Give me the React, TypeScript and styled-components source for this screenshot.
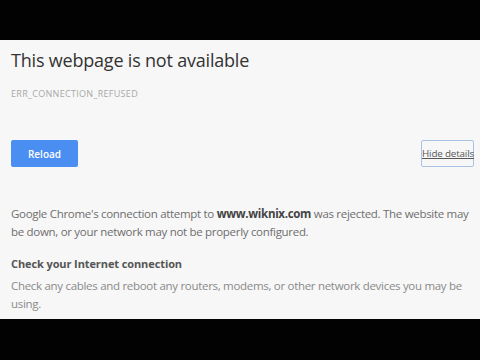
import React from "react";
import styled, { createGlobalStyle } from "styled-components";

const Global = createGlobalStyle`
  html, body { margin: 0; padding: 0; background: #020202; }
  body { font-family: "Open Sans", "Noto Sans", sans-serif; }
`;

const Frame = styled.div`
  width: 480px;
  height: 360px;
  display: flex;
  flex-direction: column;
  background: #020202;
  overflow: hidden;
`;

const Bar = styled.div<{ $h: number }>`
  height: ${(p) => p.$h}px;
  flex: none;
  background: #020202;
`;

const Page = styled.div`
  flex: 1;
  background: #f7f7f7;
  padding: 6px 6px 0 11px;
  display: flex;
  flex-direction: column;
  overflow: hidden;
`;

const Title = styled.h1`
  margin: 0;
  font-size: 18px;
  letter-spacing: -0.2px;
  font-weight: 400;
  color: #333;
  line-height: 28px;
`;

const Code = styled.div`
  margin-top: 14px;
  font-size: 9px;
  letter-spacing: 0.3px;
  color: #a8a8a8;
  line-height: 12px;
  text-transform: uppercase;
`;

const Buttons = styled.div`
  margin-top: 40px;
  display: flex;
  justify-content: space-between;
  align-items: center;
`;

const ReloadButton = styled.button`
  width: 67px;
  height: 27px;
  border: none;
  border-radius: 2px;
  background: #4a8ef2;
  color: #fff;
  font-family: inherit;
  font-size: 10px;
  font-weight: 600;
  padding: 0;
`;

const DetailsButton = styled.button`
  width: 53px;
  height: 27px;
  border: 1px solid #a9c2e6;
  border-radius: 2px;
  background: transparent;
  color: #555;
  font-family: inherit;
  font-size: 9.8px;
  letter-spacing: -0.15px;
  text-decoration: underline;
  padding: 0;
  white-space: nowrap;
`;

const Para = styled.p`
  margin: 38px 0 0;
  font-size: 11.5px;
  letter-spacing: -0.3px;
  line-height: 18px;
  color: #6e6e6e;
  b { color: #444; font-weight: 700; }
`;

const Heading = styled.h2`
  margin: 14px 0 0;
  font-size: 11px;
  letter-spacing: -0.1px;
  font-weight: 700;
  color: #555;
  line-height: 18px;
`;

const SubPara = styled.p`
  margin: 4px 0 0;
  font-size: 11.5px;
  letter-spacing: -0.3px;
  line-height: 18px;
  color: #8a8a8a;
`;

export default function App() {
  return (
    <>
      <Global />
      <Frame>
        <Bar $h={40} />
        <Page>
          <Title>This webpage is not available</Title>
          <Code>ERR_CONNECTION_REFUSED</Code>
          <Buttons>
            <ReloadButton>Reload</ReloadButton>
            <DetailsButton>Hide details</DetailsButton>
          </Buttons>
          <Para>
            Google Chrome's connection attempt to <b>www.wiknix.com</b> was rejected. The website may be down, or your network may not be properly configured.
          </Para>
          <Heading>Check your Internet connection</Heading>
          <SubPara>
            Check any cables and reboot any routers, modems, or other network devices you may be using.
          </SubPara>
        </Page>
        <Bar $h={41} />
      </Frame>
    </>
  );
}
